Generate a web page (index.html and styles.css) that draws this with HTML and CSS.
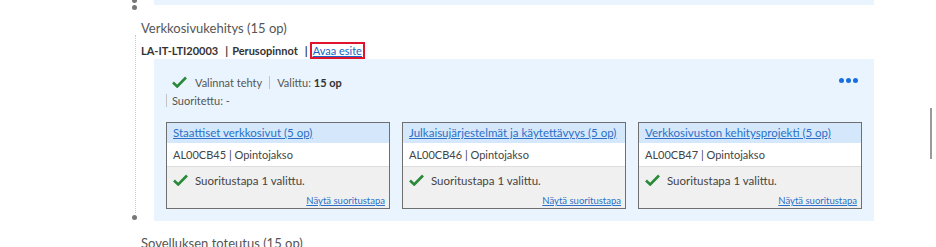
FILE: index.html
```html
<!DOCTYPE html>
<html lang="fi">
<head>
  <meta charset="UTF-8">
  <meta name="viewport" content="width=device-width, initial-scale=1.0">
  <title>Opintosuunnitelma</title>
  <link rel="stylesheet" href="styles.css">
</head>
<body>
  <div class="plan">
    <div class="entry entry-prev">
      <div class="panel panel-tail"></div>
    </div>

    <div class="entry entry-open">
      <h2 class="module-title">Verkkosivukehitys (15 op)</h2>
      <div class="module-meta">
        <span class="code">LA-IT-LTI20003</span>
        <span class="pipe">|</span>
        <span>Perusopinnot</span>
        <span class="pipe">|</span><a href="#" class="brochure">Avaa esite</a>
      </div>

      <div class="panel">
        <div class="status">
          <div class="status-line">
            <svg class="check" width="15" height="12" viewBox="0 0 15 12"><path d="M1 6.5 L5.2 10.5 L14 1.5" fill="none" stroke="#2a8a3a" stroke-width="2.6"/></svg>
            <span class="done">Valinnat tehty</span>
            <span class="sep"></span>
            <span>Valittu: <b>15 op</b></span>
          </div>
          <div class="status-line">
            <span class="sep sep-first"></span>
            <span>Suoritettu: -</span>
          </div>
          <button class="more" aria-label="Lisää">
            <span></span><span></span><span></span>
          </button>
        </div>

        <div class="cards">
          <div class="card">
            <a href="#" class="card-title">Staattiset verkkosivut (5 op)</a>
            <div class="card-code">AL00CB45 | Opintojakso</div>
            <div class="card-foot">
              <div class="card-state">
                <svg class="check" width="15" height="12" viewBox="0 0 15 12"><path d="M1 6.5 L5.2 10.5 L14 1.5" fill="none" stroke="#2a8a3a" stroke-width="2.6"/></svg>
                <span>Suoritustapa 1 valittu.</span>
              </div>
              <a href="#" class="card-link">Näytä suoritustapa</a>
            </div>
          </div>
          <div class="card">
            <a href="#" class="card-title">Julkaisujärjestelmät ja käytettävyys (5 op)</a>
            <div class="card-code">AL00CB46 | Opintojakso</div>
            <div class="card-foot">
              <div class="card-state">
                <svg class="check" width="15" height="12" viewBox="0 0 15 12"><path d="M1 6.5 L5.2 10.5 L14 1.5" fill="none" stroke="#2a8a3a" stroke-width="2.6"/></svg>
                <span>Suoritustapa 1 valittu.</span>
              </div>
              <a href="#" class="card-link">Näytä suoritustapa</a>
            </div>
          </div>
          <div class="card">
            <a href="#" class="card-title">Verkkosivuston kehitysprojekti (5 op)</a>
            <div class="card-code">AL00CB47 | Opintojakso</div>
            <div class="card-foot">
              <div class="card-state">
                <svg class="check" width="15" height="12" viewBox="0 0 15 12"><path d="M1 6.5 L5.2 10.5 L14 1.5" fill="none" stroke="#2a8a3a" stroke-width="2.6"/></svg>
                <span>Suoritustapa 1 valittu.</span>
              </div>
              <a href="#" class="card-link">Näytä suoritustapa</a>
            </div>
          </div>
        </div>
      </div>
    </div>

    <div class="entry entry-next">
      <h2 class="module-title">Sovelluksen toteutus (15 op)</h2>
    </div>
  </div>

  <div class="scroll-thumb"></div>
</body>
</html>
```

FILE: styles.css
```css
body {
  margin: 0;
  font-family: Lato, "Noto Sans", sans-serif;
  color: #333;
  background: #fff;
  overflow: hidden;
}
.plan {
  padding-left: 141px;
  width: 733px;
}
.entry {
  position: relative;
}
.entry::before {
  content: "";
  position: absolute;
  left: -9px;
  width: 5px;
  height: 5px;
  border-radius: 50%;
  background: #777;
}
.entry-prev::before {
  top: -2px;
}
.entry-next::before {
  top: -6px;
}
.entry-open::after {
  content: "";
  position: absolute;
  left: -6px;
  top: 30px;
  bottom: 8px;
  border-left: 1px dotted #c8c8c8;
}
.panel {
  margin-left: 13px;
  background: #eaf4fe;
}
.panel-tail {
  height: 5px;
}
.module-title {
  margin: 0;
  padding-top: 13px;
  font-size: 13px;
  font-weight: 400;
  line-height: 20px;
  color: #555;
}
.entry-next .module-title {
  padding-top: 12px;
}
.module-meta {
  display: flex;
  align-items: center;
  height: 17px;
  margin-top: 4px;
  font-size: 11px;
  font-weight: 700;
  color: #333;
}
.pipe {
  margin: 0 4px 0 7px;
}
.brochure {
  color: #1a64c8;
  font-weight: 400;
  outline: 2px solid #e0142c;
  outline-offset: 0;
  padding: 0 1px;
}
.status {
  position: relative;
  padding: 14px 12px 0;
  font-size: 11px;
  color: #555;
}
.status-line {
  display: flex;
  align-items: center;
  height: 18px;
}
.status-line b {
  color: #333;
  font-weight: 700;
}
.check {
  margin: 0 8px 0 6px;
}
.done {
  color: #555;
}
.sep {
  width: 1px;
  height: 13px;
  background: #c4c4c4;
  margin: 0 7px;
}
.sep-first {
  margin-left: 0;
  margin-right: 5px;
}
.more {
  position: absolute;
  right: 16px;
  top: 19px;
  display: flex;
  gap: 2px;
  padding: 0;
  border: 0;
  background: none;
}
.more span {
  width: 5px;
  height: 5px;
  border-radius: 50%;
  background: #1a6fe0;
}
.cards {
  display: grid;
  grid-template-columns: repeat(3, 224px);
  gap: 12px;
  padding: 13px 12px 12px;
}
.card {
  display: flex;
  flex-direction: column;
  border: 1px solid #6f6f6f;
  background: #f0f0f0;
  height: 87px;
  box-sizing: border-box;
  font-size: 11px;
}
.card-title {
  display: block;
  height: 20px;
  line-height: 20px;
  padding: 0 6px;
  background: #d5e8fb;
  color: #2a70c8;
  font-size: 11.5px;
  white-space: nowrap;
}
.card-code {
  height: 23px;
  line-height: 23px;
  padding: 0 6px;
  background: #fff;
  color: #444;
  border-bottom: 1px solid #ddd;
}
.card-foot {
  flex: 1;
  display: flex;
  flex-direction: column;
  padding: 4px 4px 0 0;
}
.card-state {
  display: flex;
  align-items: center;
  height: 18px;
  font-size: 11.5px;
  color: #444;
}
.card-state .check {
  margin: 0 7px 0 6px;
}
.card-link {
  margin-top: auto;
  margin-bottom: 2px;
  align-self: flex-end;
  font-size: 9.5px;
  color: #2a70c8;
}
.scroll-thumb {
  position: fixed;
  left: 930px;
  top: 108px;
  width: 2px;
  height: 51px;
  background: #9a9a9a;
}
```
